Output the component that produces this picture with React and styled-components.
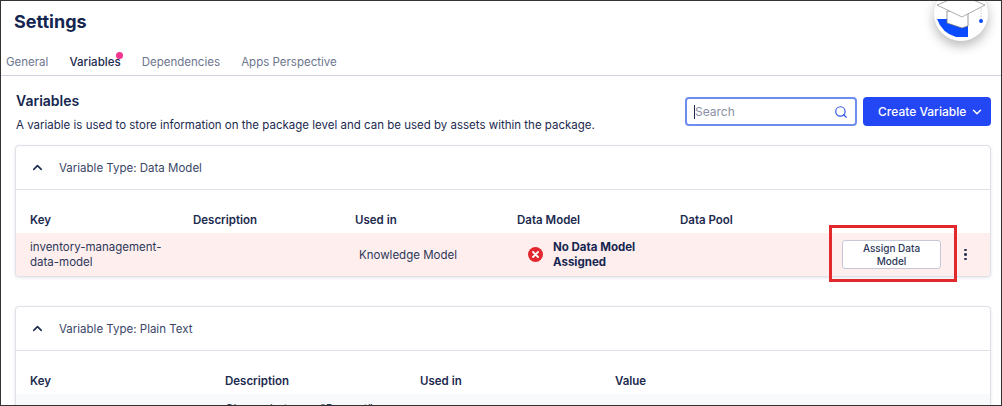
import styled, { createGlobalStyle } from "styled-components";
import { ChevronDown, ChevronUp, Search as SearchIcon } from "lucide-react";

const GlobalStyle = createGlobalStyle`
  html, body {
    margin: 0;
    padding: 0;
    background: #fff;
  }
  body {
    font-family: Inter, "Liberation Sans", sans-serif;
    color: #1c2a4f;
  }
`;

const dataModelColumns = "163px 162px 162px 163px 162px 1fr";
const plainTextColumns = "195px 195px 195px 1fr";

const App = () => {
  return (
    <Frame>
      <GlobalStyle />
      <Header>
        <PageTitle>Settings</PageTitle>
        <Tabs>
          <Tab>General</Tab>
          <Tab $active>
            Variables
            <TabDot />
          </Tab>
          <Tab>Dependencies</Tab>
          <Tab>Apps Perspective</Tab>
        </Tabs>
        <Badge>
          <svg width="54" height="54" viewBox="0 0 54 54">
            <path d="M3 32 H34 V50 H22 Q8 46 3 32 Z" fill="#0a4bff" />
            <path d="M13 24 V36 L28 41 L34 39 V24 Z" fill="#fff" stroke="#6f6f6f" strokeWidth="0.7" />
            <path d="M3 18 L28 30 L51 18 L27 8 Z" fill="#fff" stroke="#8a8a8a" strokeWidth="0.7" />
            <path d="M47 21 V33" stroke="#b8b8b8" strokeWidth="0.7" strokeDasharray="1.5 1" />
            <circle cx="47" cy="34" r="2" fill="#0a4bff" />
          </svg>
        </Badge>
      </Header>
      <Content>
        <SectionHead>
          <div>
            <SectionTitle>Variables</SectionTitle>
            <SectionText>
              A variable is used to store information on the package level and can be used by assets within the package.
            </SectionText>
          </div>
          <Actions>
            <SearchBox>
              <Caret />
              <SearchPlaceholder>Search</SearchPlaceholder>
              <SearchIcon size={14} color="#2f55e8" strokeWidth={2} />
            </SearchBox>
            <PrimaryButton>
              Create Variable
              <ChevronDown size={14} strokeWidth={2.5} />
            </PrimaryButton>
          </Actions>
        </SectionHead>

        <Card>
          <CardHead>
            <ChevronUp size={15} strokeWidth={2.5} color="#1c2a4f" />
            <CardTitle>Variable Type: Data Model</CardTitle>
          </CardHead>
          <TableHead $columns={dataModelColumns}>
            <HeadCell>Key</HeadCell>
            <HeadCell>Description</HeadCell>
            <HeadCell>Used in</HeadCell>
            <HeadCell>Data Model</HeadCell>
            <HeadCell>Data Pool</HeadCell>
          </TableHead>
          <ErrorRow $columns={dataModelColumns}>
            <KeyCell>inventory-management-data-model</KeyCell>
            <div />
            <UsedInCell>Knowledge Model</UsedInCell>
            <StatusCell>
              <svg width="15" height="15" viewBox="0 0 15 15">
                <circle cx="7.5" cy="7.5" r="7.5" fill="#e3262e" />
                <path d="M5 5 L10 10 M10 5 L5 10" stroke="#fff" strokeWidth="1.8" strokeLinecap="round" />
              </svg>
              <StatusText>No Data Model Assigned</StatusText>
            </StatusCell>
            <div />
            <RowActions>
              <AssignButton>Assign Data Model</AssignButton>
              <Highlight />
              <MoreDots>
                <i />
                <i />
                <i />
              </MoreDots>
            </RowActions>
          </ErrorRow>
        </Card>

        <Card $second>
          <CardHead>
            <ChevronUp size={15} strokeWidth={2.5} color="#1c2a4f" />
            <CardTitle>Variable Type: Plain Text</CardTitle>
          </CardHead>
          <TableHead $columns={plainTextColumns}>
            <HeadCell>Key</HeadCell>
            <HeadCell>Description</HeadCell>
            <HeadCell>Used in</HeadCell>
            <HeadCell>Value</HeadCell>
          </TableHead>
          <PlainRow $columns={plainTextColumns}>
            <div />
            <PlainCell>Choose between "Percent" or</PlainCell>
          </PlainRow>
        </Card>
      </Content>
    </Frame>
  );
};

const Frame = styled.div`
  box-sizing: border-box;
  width: 1002px;
  height: 406px;
  border: 1px solid #333;
  overflow: hidden;
  position: relative;
  background: #fff;
`;

const Header = styled.header`
  box-sizing: border-box;
  height: 75px;
  border-bottom: 1px solid #cfd1dc;
  padding: 11px 0 0 13px;
  display: flex;
  flex-direction: column;
`;

const PageTitle = styled.h1`
  margin: 0;
  font-size: 18px;
  line-height: 20px;
  font-weight: 700;
  color: #14264f;
`;

const Tabs = styled.nav`
  display: flex;
  gap: 21.2px;
  margin: 21px 0 0 -8px;
`;

const Tab = styled.span`
  position: relative;
  font-size: 11.5px;
  line-height: 18px;
  font-weight: ${(p) => (p.$active ? 500 : 400)};
  color: ${(p) => (p.$active ? "#1c2a4f" : "#6d7690")};
`;

const TabDot = styled.span`
  position: absolute;
  right: -2px;
  top: -1px;
  width: 7px;
  height: 7px;
  border-radius: 50%;
  background: #f5348f;
`;

const Badge = styled.div`
  position: absolute;
  left: 933px;
  top: -14px;
  width: 54px;
  height: 54px;
  border-radius: 50%;
  background: #fff;
  box-shadow: 0 5px 12px rgba(0, 0, 0, 0.28);
  overflow: hidden;
`;

const Content = styled.main`
  padding: 0 10px 0 14px;
`;

const SectionHead = styled.div`
  display: flex;
  justify-content: space-between;
  height: 69px;
`;

const SectionTitle = styled.h2`
  margin: 15px 0 0 1px;
  font-size: 14px;
  line-height: 20px;
  font-weight: 600;
  color: #14264f;
`;

const SectionText = styled.p`
  margin: 6px 0 0 1px;
  font-size: 11.5px;
  line-height: 16px;
  color: #1c2a4f;
`;

const Actions = styled.div`
  display: flex;
  gap: 6px;
  padding-top: 21px;
  align-items: flex-start;
`;

const SearchBox = styled.div`
  box-sizing: border-box;
  width: 172px;
  height: 29px;
  border: 2px solid #6f8cf0;
  border-radius: 4px;
  display: flex;
  align-items: center;
  padding: 0 7px 0 7px;
`;

const Caret = styled.span`
  width: 1px;
  height: 14px;
  background: #1c2a4f;
`;

const SearchPlaceholder = styled.span`
  flex: 1;
  font-size: 12px;
  color: #8a90a3;
`;

const PrimaryButton = styled.button`
  box-sizing: border-box;
  width: 128px;
  height: 29px;
  border: 0;
  border-radius: 4px;
  background: #2347f5;
  color: #fff;
  font-family: inherit;
  font-size: 12px;
  font-weight: 500;
  display: flex;
  align-items: center;
  justify-content: space-between;
  padding: 0 7px 0 15px;
`;

const Card = styled.section`
  box-sizing: border-box;
  width: 976px;
  margin-top: ${(p) => (p.$second ? "29px" : "0")};
  border: 1px solid #dfe1e9;
  border-radius: 4px;
  box-shadow: 0 1px 3px rgba(30, 40, 80, 0.12);
  background: #fff;
`;

const CardHead = styled.div`
  height: 43px;
  border-bottom: 1px solid #dfe1e9;
  display: flex;
  align-items: center;
  gap: 14px;
  padding-left: 14px;
`;

const CardTitle = styled.span`
  font-size: 11.5px;
  color: #3a4668;
`;

const TableHead = styled.div`
  display: grid;
  grid-template-columns: ${(p) => p.$columns};
  height: 43px;
  align-items: end;
  padding-left: 14px;
`;

const HeadCell = styled.span`
  font-size: 11.5px;
  line-height: 16px;
  font-weight: 600;
  color: #1c2a4f;
  padding-bottom: 5px;
`;

const ErrorRow = styled.div`
  display: grid;
  grid-template-columns: ${(p) => p.$columns};
  height: 43px;
  align-items: center;
  padding-left: 14px;
  background: #ffeeee;
  border-radius: 0 0 4px 4px;
`;

const KeyCell = styled.div`
  font-size: 11.5px;
  line-height: 15px;
  width: 140px;
  color: #2c3858;
`;

const UsedInCell = styled.div`
  font-size: 11.5px;
  padding-left: 4px;
  color: #2c3858;
`;

const StatusCell = styled.div`
  display: flex;
  align-items: center;
  gap: 10px;
  padding-left: 11px;
`;

const StatusText = styled.span`
  font-size: 11.5px;
  line-height: 15px;
  font-weight: 700;
  width: 110px;
  color: #14264f;
`;

const RowActions = styled.div`
  position: relative;
  display: flex;
  align-items: center;
`;

const AssignButton = styled.button`
  box-sizing: border-box;
  width: 99px;
  height: 29px;
  margin-left: 0;
  border: 1px solid #c5c8d6;
  border-radius: 3px;
  background: #fff;
  color: #2c3858;
  font-family: inherit;
  font-size: 10px;
  line-height: 12.5px;
  font-weight: 500;
  padding: 0 12px;
`;

const Highlight = styled.span`
  position: absolute;
  left: -13px;
  top: -15px;
  width: 128px;
  height: 57px;
  box-sizing: border-box;
  border: 3px solid #e1282d;
`;

const MoreDots = styled.span`
  display: flex;
  flex-direction: column;
  gap: 2px;
  margin-left: 23px;
  i {
    width: 2.5px;
    height: 2.5px;
    border-radius: 50%;
    background: #2c3858;
  }
`;

const PlainRow = styled.div`
  display: grid;
  grid-template-columns: ${(p) => p.$columns};
  height: 40px;
  padding-left: 14px;
  background: #f8f9fb;
`;

const PlainCell = styled.div`
  font-size: 11.5px;
  padding-top: 8px;
  white-space: nowrap;
  color: #2c3858;
`;

export default App;
